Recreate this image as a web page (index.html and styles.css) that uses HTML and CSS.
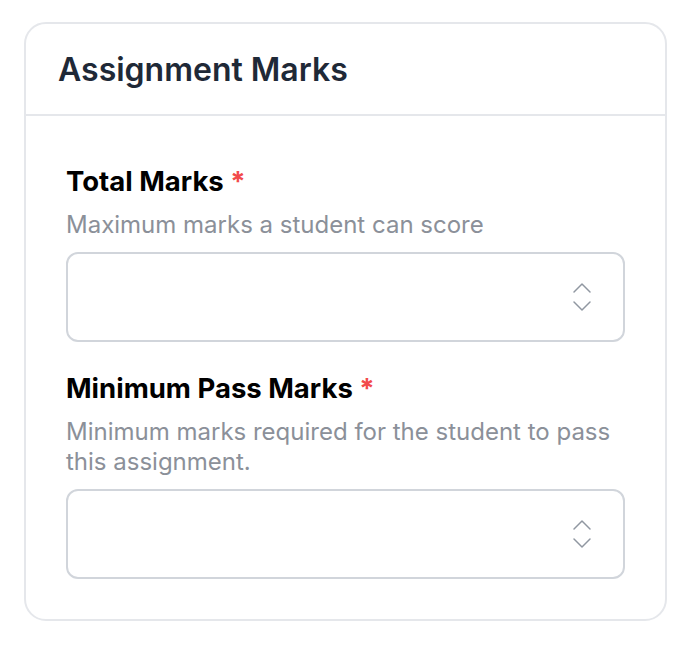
FILE: index.html
```html
<!DOCTYPE html>
<html lang="en">
<head>
    <meta charset="UTF-8">
    <meta name="viewport" content="width=device-width, initial-scale=1.0">
    <title>Assignment Marks</title>
    <link rel="stylesheet" href="styles.css">
</head>
<body>

    <!-- Marks Card -->
    <div class="card">
        <div class="card-header">
            <h2>Assignment Marks</h2>
        </div>

        <div class="card-body">
            <div class="field">
                <label for="total">Total Marks <span class="req">*</span></label>
                <p class="hint">Maximum marks a student can score</p>
                <div class="number-box">
                    <input type="text" id="total">
                    <svg class="spin" width="20" height="30" viewBox="0 0 20 30" fill="none" stroke="#9097a1" stroke-width="1.5" stroke-linecap="round" stroke-linejoin="round">
                        <path d="M2 10 L10 2 L18 10"/>
                        <path d="M2 20 L10 28 L18 20"/>
                    </svg>
                </div>
            </div>

            <div class="field">
                <label for="pass">Minimum Pass Marks <span class="req">*</span></label>
                <p class="hint">Minimum marks required for the student to pass this assignment.</p>
                <div class="number-box">
                    <input type="text" id="pass">
                    <svg class="spin" width="20" height="30" viewBox="0 0 20 30" fill="none" stroke="#9097a1" stroke-width="1.5" stroke-linecap="round" stroke-linejoin="round">
                        <path d="M2 10 L10 2 L18 10"/>
                        <path d="M2 20 L10 28 L18 20"/>
                    </svg>
                </div>
            </div>
        </div>
    </div>

</body>
</html>
```

FILE: styles.css
```css
/* ===== General ===== */
body {
    margin: 0;
    padding: 22px 25px 27px 24px;
    background: #ffffff;
    font-family: Inter, "Noto Sans", Arial, sans-serif;
}

/* ===== Card ===== */
.card {
    border: 2px solid #e5e7eb;
    border-radius: 22px;
    background: #fff;
}

.card-header {
    padding: 26px 32px 24px;
    border-bottom: 2px solid #e5e7eb;
}

.card-header h2 {
    margin: 0;
    font-size: 32px;
    font-weight: 600;
    line-height: 40px;
    color: #1f2937;
}

.card-body {
    padding: 48px 40px 40px;
    display: flex;
    flex-direction: column;
    gap: 29px;
}

/* ===== Fields ===== */
label {
    display: block;
    font-size: 27.5px;
    font-weight: 700;
    line-height: 34px;
    color: #000;
}

.req {
    color: #f24b4b;
}

.hint {
    margin: 12px 0 12px;
    font-size: 24px;
    line-height: 30px;
    color: #8b9099;
}

.number-box {
    display: flex;
    align-items: center;
    height: 86px;
    border: 2px solid #d1d5db;
    border-radius: 12px;
    padding: 0 31px 0 20px;
}

.number-box input {
    flex: 1;
    border: none;
    outline: none;
    font: inherit;
    font-size: 24px;
    background: transparent;
}
```
